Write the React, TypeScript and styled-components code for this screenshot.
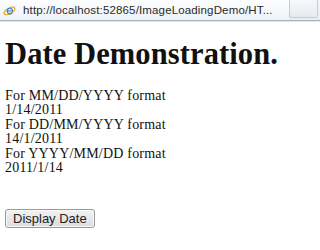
import styled, { createGlobalStyle } from 'styled-components';

const GlobalStyle = createGlobalStyle`
  html, body {
    margin: 0;
    padding: 0;
    background: #ffffff;
  }
`;

const Window = styled.div`
  width: 320px;
  height: 250px;
  overflow: hidden;
  display: flex;
  flex-direction: column;
  background: #fff;
`;

const TabBar = styled.div`
  height: 20px;
  display: flex;
  align-items: stretch;
  background: linear-gradient(#f4f7fb, #e9eef5);
  border-bottom: 1px solid #a9b1bb;
  box-shadow: 0 1px 0 #e3e6ea;
`;

const Tab = styled.div`
  flex: 1;
  display: flex;
  align-items: center;
  gap: 7px;
  padding-left: 3px;
  background: linear-gradient(#fdfeff, #eef2f7);
`;

const Url = styled.span`
  font-family: 'Liberation Sans', Arial, sans-serif;
  font-size: 11.5px;
  color: #2a2a2a;
  white-space: nowrap;
  letter-spacing: 0.15px;
`;

const NewTab = styled.div`
  width: 27px;
  margin: 0 2px 2px 0;
  border: 1px solid #c6ccd4;
  border-top: none;
  border-radius: 0 0 2px 2px;
  background: linear-gradient(#f7f9fb, #e6eaef);
`;

const Page = styled.div`
  padding: 18px 5px 0 5px;
  font-family: 'Liberation Serif', 'Times New Roman', serif;
  color: #111;
`;

const Title = styled.h1`
  margin: 0 0 19px 0;
  font-size: 30.5px;
  line-height: 31px;
  font-weight: bold;
  letter-spacing: 0.1px;
`;

const Line = styled.div`
  font-size: 14px;
  line-height: 14.4px;
  letter-spacing: 0.2px;
`;

const Button = styled.button`
  margin-top: 34px;
  padding: 1px 7px 1px;
  font-family: 'Liberation Sans', Arial, sans-serif;
  font-size: 13px;
  color: #222;
  border: 1px solid #9a9a9a;
  border-radius: 3px;
  background: linear-gradient(#f2f2f2, #dcdcdc);
  box-shadow: inset 0 0 0 1px #f8f8f8;
`;

const IeIcon = () => (
  <svg width="13" height="13" viewBox="0 0 16 16">
    <ellipse cx="8" cy="8.5" rx="7.3" ry="3.2" fill="none" stroke="#e9a829" strokeWidth="1.6" transform="rotate(-30 8 8.5)" />
    <path
      d="M12.4 9.2H6.2c.2 1.5 1.2 2.3 2.5 2.3 1 0 1.7-.4 2.2-1.1h1.4c-.7 1.6-2 2.5-3.7 2.5-2.4 0-4-1.7-4-4.2 0-2.4 1.7-4.2 4-4.2 2.4 0 3.9 1.7 3.9 4.2v.5zM6.2 8h4.6c-.1-1.3-1-2.1-2.3-2.1S6.4 6.7 6.2 8z"
      fill="#2a7fd4"
    />
  </svg>
);

export default function App() {
  return (
    <Window>
      <GlobalStyle />
      <TabBar>
        <Tab>
          <IeIcon />
          <Url>http://localhost:52865/ImageLoadingDemo/HT...</Url>
        </Tab>
        <NewTab />
      </TabBar>
      <Page>
        <Title>Date Demonstration.</Title>
        <Line>For MM/DD/YYYY format</Line>
        <Line>1/14/2011</Line>
        <Line>For DD/MM/YYYY format</Line>
        <Line>14/1/2011</Line>
        <Line>For YYYY/MM/DD format</Line>
        <Line>2011/1/14</Line>
        <Button>Display Date</Button>
      </Page>
    </Window>
  );
}
